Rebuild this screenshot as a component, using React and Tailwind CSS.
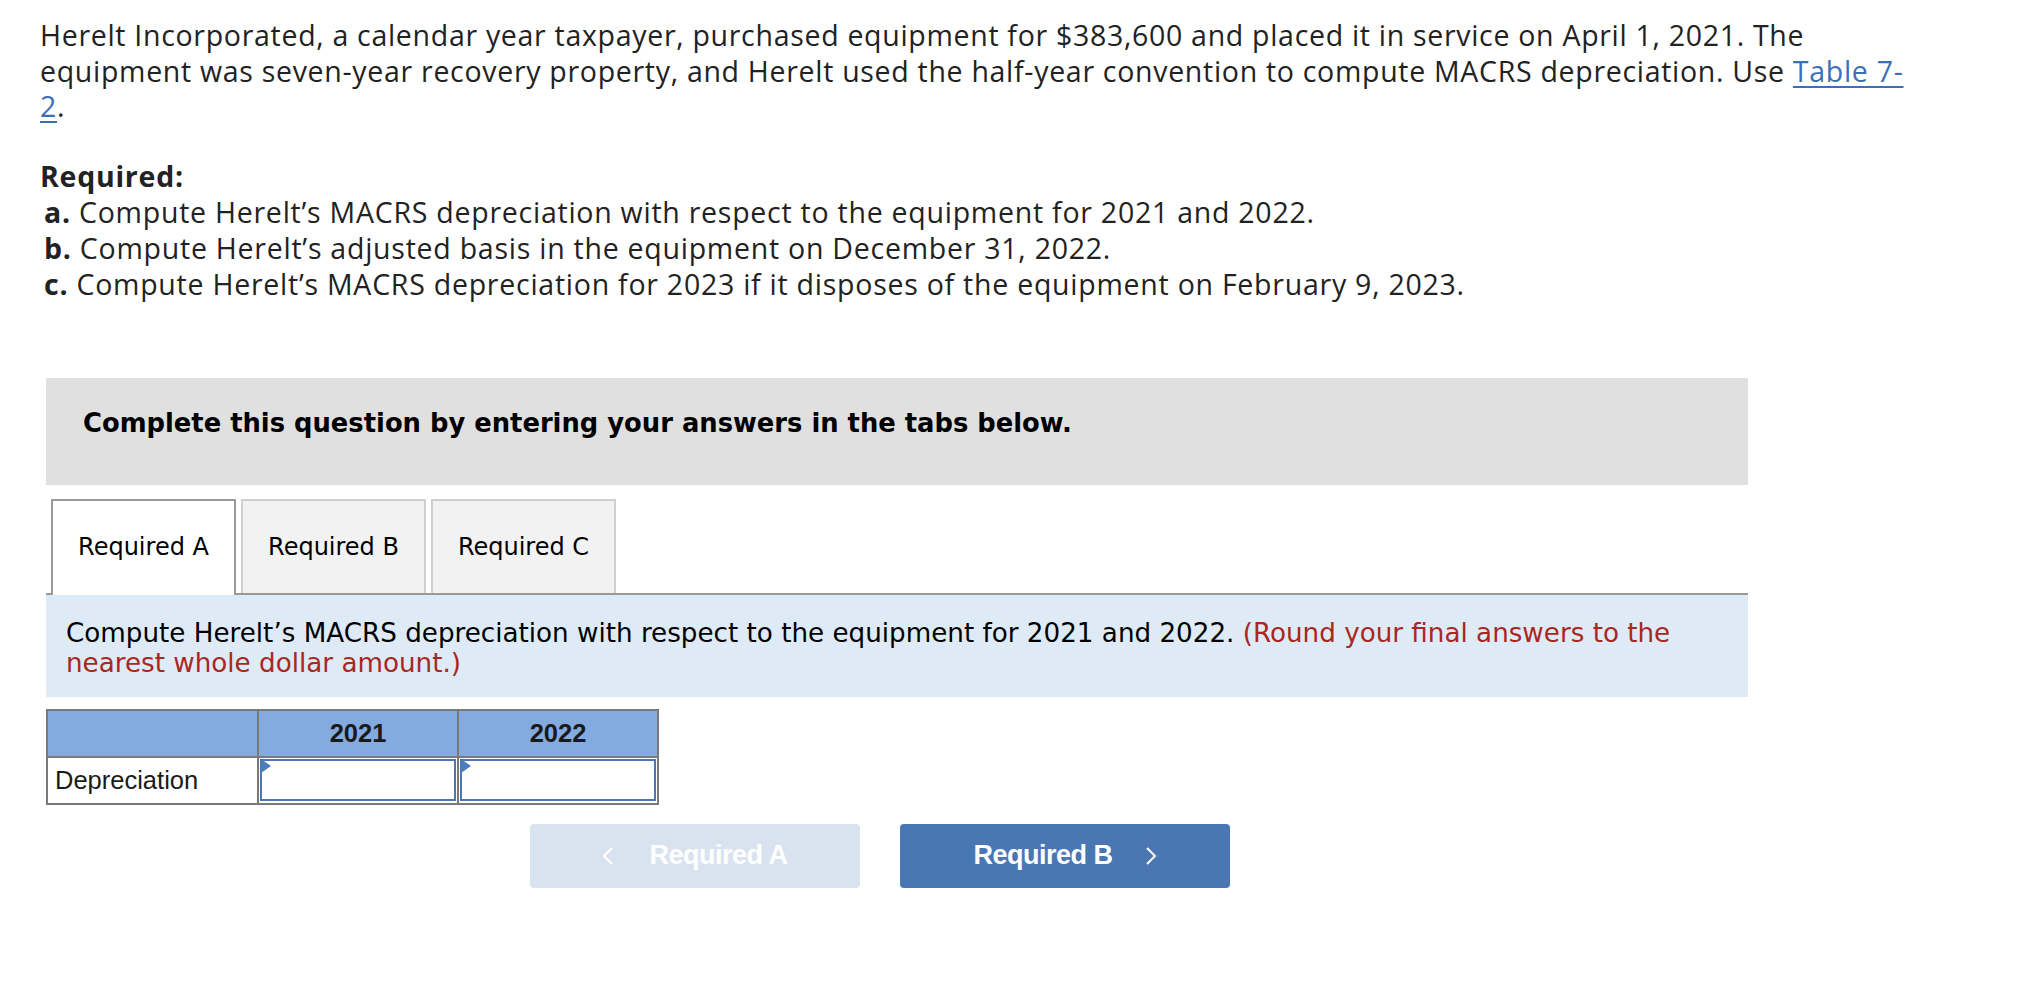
import React from 'react';

const body = { fontFamily: '"Open Sans", Lato, sans-serif' };
const tahoma = { fontFamily: '"DejaVu Sans", Verdana, sans-serif' };
const arial = { fontFamily: '"Liberation Sans", Arial, sans-serif' };

function Chevron({ dir = 'right' }) {
  return (
    <svg width="12" height="20" viewBox="0 0 12 20" fill="none" stroke="currentColor" strokeWidth="2">
      {dir === 'right' ? <polyline points="2,2 10,10 2,18" /> : <polyline points="10,2 2,10 10,18" />}
    </svg>
  );
}

function InputCell() {
  return (
    <td className="border-2 border-[#7a7a7a] p-0 h-[47px] relative">
      <div className="absolute left-[2px] top-[1px] w-0 h-0 border-t-[7px] border-b-[7px] border-l-[10px] border-t-transparent border-b-transparent border-l-[#4a7ebb]" />
      <div className="h-[42px] mx-[1px] border-2 border-[#4a76b8] bg-white" />
    </td>
  );
}

export default function App() {
  return (
    <div className="bg-white min-h-screen pl-[40px] pt-[18px] text-[#222]">
      <div style={body} className="text-[28.5px] leading-[35.5px] tracking-[0.7px]">
        Herelt Incorporated, a calendar year taxpayer, purchased equipment for $383,600 and placed it in service on April 1, 2021. The
        <br />
        equipment was seven-year recovery property, and Herelt used the half-year convention to compute MACRS depreciation. Use{' '}
        <a className="text-[#3d6fb6] underline underline-offset-4">Table 7-</a>
        <br />
        <a className="text-[#3d6fb6] underline underline-offset-4">2</a>.
      </div>

      <div style={body} className="text-[28.5px] leading-[36px] tracking-[0.75px] mt-[33px]">
        <div className="font-bold">Required:</div>
        <div className="pl-[4px]"><b>a.</b> Compute Herelt’s MACRS depreciation with respect to the equipment for 2021 and 2022.</div>
        <div className="pl-[4px]"><b>b.</b> Compute Herelt’s adjusted basis in the equipment on December 31, 2022.</div>
        <div className="pl-[4px]"><b>c.</b> Compute Herelt’s MACRS depreciation for 2023 if it disposes of the equipment on February 9, 2023.</div>
      </div>

      <div className="ml-[6px] w-[1702px] mt-[76px]">
        <div style={tahoma} className="bg-[#e0e0e0] h-[107px] pl-[37px] pt-[30px] text-[25.8px] leading-[30px] font-bold text-black">
          Complete this question by entering your answers in the tabs below.
        </div>

        <div style={tahoma} className="mt-[14px] flex items-end gap-[5px] pl-[5px] border-b-2 border-[#999] text-[24px] text-black">
          <div className="w-[185px] h-[96px] -mb-[2px] border-2 border-b-0 border-[#999] bg-white flex items-center justify-center pb-[2px]">
            Required A
          </div>
          <div className="w-[185px] h-[94px] border-2 border-b-0 border-[#cfcfcf] bg-[#f2f2f2] flex items-center justify-center">
            Required B
          </div>
          <div className="w-[185px] h-[94px] border-2 border-b-0 border-[#cfcfcf] bg-[#f2f2f2] flex items-center justify-center">
            Required C
          </div>
        </div>

        <div style={tahoma} className="bg-[#deebf7] pl-[20px] pt-[23px] pb-[19px] text-[26.2px] leading-[30px] text-black">
          Compute Herelt’s MACRS depreciation with respect to the equipment for 2021 and 2022.{' '}
          <span className="text-[#a8271f]">(Round your final answers to the</span>
          <br />
          <span className="text-[#a8271f]">nearest whole dollar amount.)</span>
        </div>

        <table style={arial} className="mt-[12px] border-collapse border-2 border-[#7a7a7a] text-[25.5px] text-[#1a1a1a]">
          <tbody>
            <tr className="bg-[#83abdf] h-[47px]">
              <td className="w-[211px] border-2 border-[#7a7a7a]"></td>
              <td className="w-[200px] border-2 border-[#7a7a7a] text-center font-bold">2021</td>
              <td className="w-[200px] border-2 border-[#7a7a7a] text-center font-bold">2022</td>
            </tr>
            <tr className="bg-white h-[47px]">
              <td className="border-2 border-[#7a7a7a] pl-[7px]">Depreciation</td>
              <InputCell />
              <InputCell />
            </tr>
          </tbody>
        </table>

        <div style={arial} className="mt-[19px] pl-[484px] flex gap-[40px] text-[27px] font-bold text-white">
          <button className="w-[330px] h-[64px] rounded-[4px] bg-[#d9e3ef] flex items-center justify-center gap-[35px]">
            <Chevron dir="left" />
            <span className="tracking-[-0.5px]">Required A</span>
          </button>
          <button className="w-[330px] h-[64px] rounded-[4px] bg-[#4a76b4] flex items-center justify-center gap-[32px]">
            <span className="tracking-[-0.5px]">Required B</span>
            <Chevron dir="right" />
          </button>
        </div>
      </div>
    </div>
  );
}
